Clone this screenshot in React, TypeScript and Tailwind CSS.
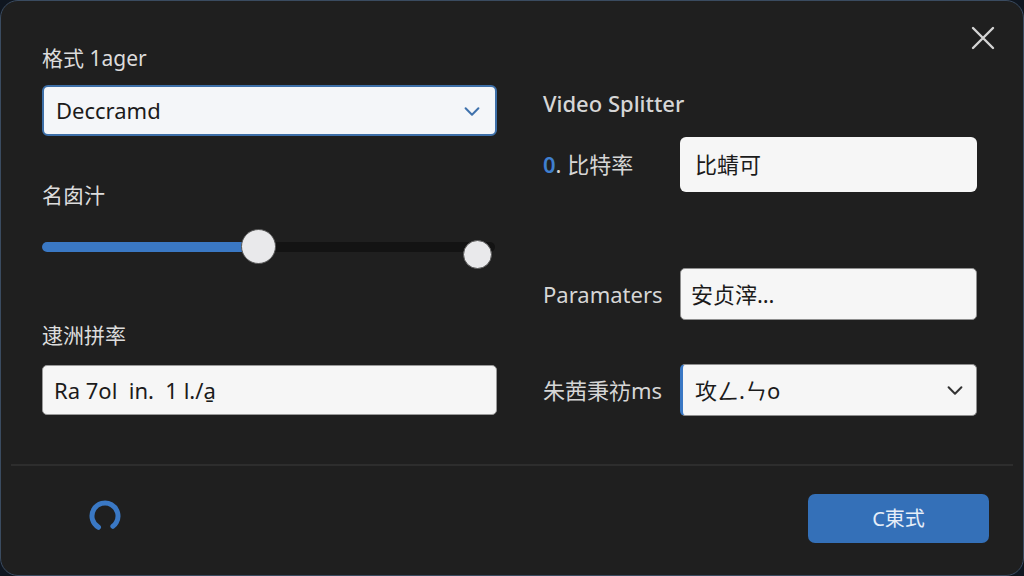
import React from "react";

const font = { fontFamily: '"Noto Sans", "Open Sans", "Noto Sans CJK SC", sans-serif' };

const Chevron: React.FC<{ color: string }> = ({ color }) => (
  <svg width="22" height="22" viewBox="0 0 24 24" fill="none" stroke={color} strokeWidth="2.2" strokeLinecap="round" strokeLinejoin="round">
    <path d="M5 9l7 7 7-7" />
  </svg>
);

const App: React.FC = () => {
  return (
    <div className="w-[1024px] h-[576px] bg-[#0f1620]" style={font}>
      <div className="relative flex flex-col w-full h-full rounded-[18px] border border-[#3a4b60] bg-[#1f1f1f]">
        {/* Close */}
        <button className="absolute right-[28px] top-[25px] text-[#d4d4d4]">
          <svg width="24" height="24" viewBox="0 0 24 24" fill="none" stroke="currentColor" strokeWidth="2.4" strokeLinecap="round">
            <path d="M2 2l20 20M22 2L2 22" />
          </svg>
        </button>

        {/* Body */}
        <div className="flex flex-1 pl-[41px] gap-[46px]">
          {/* Left column */}
          <div className="flex flex-col w-[455px] pt-[43px]">
            <div className="h-[28px] leading-[28px] text-[21px] text-[#dcdcdc]">格式 1ager</div>
            <div className="mt-[13px] flex items-center justify-between h-[51px] px-[12px] rounded-[6px] border-2 border-[#3d6fa8] bg-[#f4f6f9]">
              <span className="text-[22px] text-[#1b1b1b]">Deccramd</span>
              <Chevron color="#3f72ad" />
            </div>

            <div className="mt-[45px] h-[28px] leading-[28px] text-[21px] text-[#dcdcdc]">名囱汁</div>
            <div className="relative mt-[17px] h-[40px]">
              <div className="absolute left-0 right-[2px] top-[16px] h-[10px] rounded-full bg-[#131313]" />
              <div className="absolute left-0 w-[216px] top-[16px] h-[10px] rounded-full bg-[#3a78c4]" />
              <div className="absolute left-[199px] top-[3px] w-[35px] h-[35px] rounded-full bg-[#e9e9eb] border border-[#555]" />
              <div className="absolute left-[421px] top-[14px] w-[29px] h-[29px] rounded-full bg-[#e9e9eb] border border-[#555]" />
            </div>

            <div className="mt-[55px] h-[28px] leading-[28px] text-[21px] text-[#dcdcdc]">逮洲拼率</div>
            <div className="mt-[16px] flex items-center h-[50px] px-[11px] rounded-[5px] border border-[#9a9a9a] bg-[#f6f6f6]">
              <span className="text-[22px] text-[#1b1b1b] whitespace-pre">Ra 7ol  in.  1 l./a̱</span>
            </div>
          </div>

          {/* Right column */}
          <div className="flex flex-col w-[434px] pt-[88px]">
            <div className="h-[28px] leading-[28px] text-[22px] font-medium text-[#d6d6d6]">Video Splitter</div>

            <div className="mt-[20px] flex items-center">
              <div className="w-[137px] text-[22px] text-[#d6d6d6]">
                <span className="text-[#3f7fcf] font-semibold">0</span>. 比特率
              </div>
              <div className="flex items-center flex-1 h-[55px] px-[15px] rounded-[6px] bg-[#f6f6f6]">
                <span className="text-[22px] text-[#1b1b1b]">比蜻可</span>
              </div>
            </div>

            <div className="mt-[76px] flex items-center">
              <div className="w-[137px] text-[22px] text-[#d6d6d6]">Paramaters</div>
              <div className="flex items-center flex-1 h-[52px] px-[10px] rounded-[5px] border border-[#8f8f8f] bg-[#f6f6f6]">
                <span className="text-[22px] text-[#1b1b1b]">安贞滓…</span>
              </div>
            </div>

            <div className="mt-[44px] flex items-center">
              <div className="w-[137px] text-[22px] text-[#d6d6d6] whitespace-nowrap">朱茜秉祊ms</div>
              <div className="flex items-center justify-between flex-1 h-[52px] pl-[12px] pr-[10px] rounded-[5px] border border-[#8f8f8f] border-l-[3px] border-l-[#3a78c4] bg-[#f6f6f6]">
                <span className="text-[22px] text-[#1b1b1b]">攻ㄥ.ㄣo</span>
                <Chevron color="#333333" />
              </div>
            </div>
          </div>
        </div>

        {/* Divider */}
        <div className="mx-[10px] h-[2px] bg-[#2d2d2d]" />

        {/* Footer */}
        <div className="flex items-start justify-between h-[109px] pl-[88px] pr-[34px] pt-[28px]">
          <svg className="mt-[6px]" width="32" height="32" viewBox="0 0 32 32" fill="none">
            <circle cx="16" cy="16" r="13" stroke="#3a78c4" strokeWidth="5" strokeLinecap="round" strokeDasharray="66 16" transform="rotate(120 16 16)" />
          </svg>
          <button className="w-[181px] h-[49px] rounded-[7px] bg-[#3470b8] text-[20px] text-[#e6eef8]">C東式</button>
        </div>
      </div>
    </div>
  );
};

export default App;
